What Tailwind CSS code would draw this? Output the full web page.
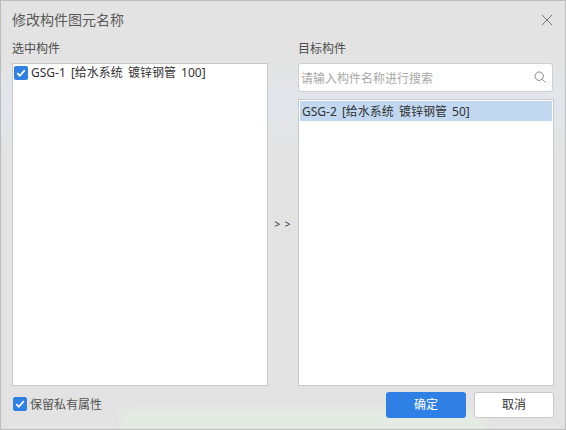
<!DOCTYPE html>
<html lang="zh">
<head>
  <meta charset="UTF-8" />
  <title>修改构件图元名称</title>
  <script src="https://cdn.jsdelivr.net/npm/@tailwindcss/browser@4"></script>
</head>
<body class="m-0">
  <div class="w-[566px] h-[430px] flex flex-col border border-[#bcbcbc] bg-[linear-gradient(to_bottom,#e3e3e3_60px,#e2e6ec_105px,#e3e3e3_150px)] text-[#444] text-[12px] font-['Noto_Sans','Noto_Sans_CJK_SC',sans-serif] overflow-hidden">
    <!-- title -->
    <div class="h-[39px] flex items-center justify-between pl-[11px] pr-[12px] pb-[2px] shrink-0">
      <span class="text-[14px] text-[#5a5a5a]">修改构件图元名称</span>
      <svg class="w-[12px] h-[12px]" viewBox="0 0 12 12" fill="none" stroke="#777" stroke-width="1">
        <path d="M1 1l10 10M11 1L1 11" />
      </svg>
    </div>

    <div class="flex-1 flex pl-[11px] pr-[11px] min-h-0">
      <!-- left -->
      <div class="w-[256px] flex flex-col">
        <div class="h-[23px] leading-[17px] text-[#4d4d4d]">选中构件</div>
        <div class="flex-1 bg-white border border-[#c8c8c8] pl-[1px] pt-[1px]">
          <div class="flex items-center h-[16px] gap-[3px]">
            <span class="w-[14px] h-[14px] rounded-[2px] bg-[#2e80e4] flex items-center justify-center">
              <svg class="w-[10px] h-[10px]" viewBox="0 0 10 10" fill="none" stroke="#fff" stroke-width="1.8"><path d="M1.2 5.2l2.6 2.6 5-5.6" /></svg>
            </span>
            <span class="text-[#333] [word-spacing:2px]">GSG-1 [给水系统 镀锌钢管 100]</span>
          </div>
        </div>
      </div>

      <!-- arrows -->
      <div class="w-[30px] flex items-center justify-center pt-[22px] text-[10px] text-[#333] tracking-[1px]">&gt; &gt;</div>

      <!-- right -->
      <div class="w-[256px] flex flex-col">
        <div class="h-[23px] leading-[17px] text-[#4d4d4d]">目标构件</div>
        <div class="h-[29px] w-[255px] bg-white border border-[#cfcfcf] rounded-[3px] flex items-center justify-between pl-[2px] pr-[6px] shrink-0">
          <span class="text-[#a8a8a8] pt-[2px]">请输入构件名称进行搜索</span>
          <svg class="w-[12px] h-[12px] -mt-[2px]" viewBox="0 0 12 12" fill="none" stroke="#888" stroke-width="1"><circle cx="5.2" cy="5.2" r="4.2" /><path d="M8.4 8.4l3 3" /></svg>
        </div>
        <div class="mt-[7px] flex-1 bg-white border border-[#c8c8c8] p-[1px]">
          <div class="h-[20px] bg-[#c1d8f0] flex items-center pl-[2px] pt-[1px] text-[#333] [word-spacing:2px]">GSG-2 [给水系统 镀锌钢管 50]</div>
        </div>
      </div>
    </div>

    <!-- footer -->
    <div class="relative h-[43px] shrink-0 flex pl-[12px] pr-[11px] pt-[6px] justify-between overflow-hidden">
      <!-- faint green tint showing through the window -->
      <div class="absolute left-[120px] w-[365px] top-[23px] h-[30px] bg-[#e4ebe2] blur-[4px]"></div>
      <div class="relative flex items-start gap-[3px] pt-[5px]">
        <span class="w-[14px] h-[14px] rounded-[2px] bg-[#2e80e4] flex items-center justify-center">
          <svg class="w-[10px] h-[10px]" viewBox="0 0 10 10" fill="none" stroke="#fff" stroke-width="1.8"><path d="M1.2 5.2l2.6 2.6 5-5.6" /></svg>
        </span>
        <span class="text-[#555] leading-[16px]">保留私有属性</span>
      </div>
      <div class="relative flex gap-[8px] items-start">
        <button class="w-[80px] h-[26px] rounded-[3px] bg-[#2e80e4] text-white text-[12px]">确定</button>
        <button class="w-[80px] h-[26px] rounded-[3px] bg-white border border-[#c8c8c8] text-[#333] text-[12px]">取消</button>
      </div>
    </div>
  </div>
</body>
</html>
